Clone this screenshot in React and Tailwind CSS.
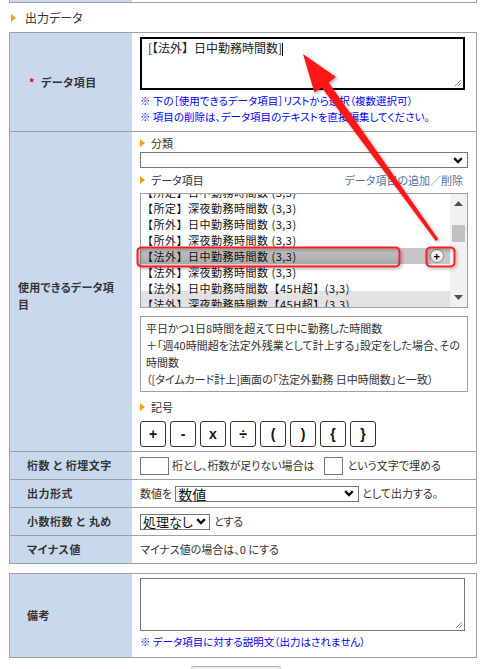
import React from "react";

function Tri() {
  return (
    <svg width="5" height="8" viewBox="0 0 5 8" className="shrink-0">
      <path d="M0 0 L5 4 L0 8Z" fill="#f5a00f" />
    </svg>
  );
}

function Chevron() {
  return (
    <svg width="10" height="7" viewBox="0 0 10 7" className="shrink-0">
      <path d="M1.2 1.2 L5 5 L8.8 1.2" fill="none" stroke="#111" strokeWidth="2.4" />
    </svg>
  );
}

function Grip() {
  return (
    <svg width="9" height="9" viewBox="0 0 9 9" className="absolute right-[1px] bottom-[1px]">
      <path d="M8 2 L2 8 M8 5 L5 8" stroke="#888" strokeWidth="1" />
    </svg>
  );
}

const items = [
  "【所定】日中勤務時間数 (3,3)",
  "【所定】深夜勤務時間数 (3,3)",
  "【所外】日中勤務時間数 (3,3)",
  "【所外】深夜勤務時間数 (3,3)",
  "【法外】日中勤務時間数 (3,3)",
  "【法外】深夜勤務時間数 (3,3)",
  "【法外】日中勤務時間数【45H超】(3,3)",
  "【法外】深夜勤務時間数【45H超】(3,3)",
];

const symbols = ["+", "-", "x", "÷", "(", ")", "{", "}"];

export default function App() {
  return (
    <div className="relative w-[489px] h-[669px] overflow-hidden bg-white font-['Noto_Sans_CJK_JP',sans-serif] text-[#333] [font-feature-settings:'palt']">
      {/* top remnant */}
      <div className="ml-[9px] w-[468px] h-[3px] border-x border-b border-[#a0a0a0] flex">
        <div className="w-[122px] bg-[#c8d9ee]" />
      </div>

      {/* section header */}
      <div className="h-[29px] flex items-center pl-[11px] gap-[9px] text-[12px]">
        <Tri />
        <span className="leading-[16px]">出力データ</span>
      </div>

      {/* main table */}
      <div className="ml-[9px] w-[468px] border border-[#a0a0a0]">
        {/* row 1 */}
        <div className="flex border-b border-[#a0a0a0]">
          <div className="w-[122px] shrink-0 bg-[#c8d9ee] flex items-center pl-[19px] text-[11px] font-bold tracking-[0.5px]">
            <span className="text-[#e00000] mr-[6px]">*</span>データ項目
          </div>
          <div className="flex-1 pl-[8px] pt-[4px] pb-[6px]">
            <div className="relative w-[325px] h-[53px] border-2 border-black bg-white pl-[6px] pt-[1px] text-[12px] leading-[16px] text-[#222] [font-feature-settings:normal]">
              [【法外】日中勤務時間数]
              <span className="inline-block w-[1px] h-[13px] bg-black align-middle" />
              <Grip />
            </div>
            <div className="mt-[3px] text-[10.5px] leading-[16px] text-[#0000ff] whitespace-nowrap">
              <div>※ 下の［使用できるデータ項目］リストから選択（複数選択可）</div>
              <div>※ 項目の削除は、データ項目のテキストを直接編集してください。</div>
            </div>
          </div>
        </div>

        {/* row 2 */}
        <div className="flex border-b border-[#a0a0a0]">
          <div className="w-[122px] shrink-0 bg-[#c8d9ee] flex items-center pl-[8px] pt-[8px] text-[11px] font-bold leading-[17px] tracking-[0.3px]">
            <span>
              使用できるデータ項
              <br />目
            </span>
          </div>
          <div className="flex-1 pl-[8px] pt-[3px] pb-[4px]">
            <div className="flex items-center gap-[6px] h-[16px] text-[11px]">
              <Tri />
              <span>分類</span>
            </div>
            <div className="mt-[1px] w-[328px] h-[16px] border border-[#767676] bg-white flex items-center justify-end pr-[4px]">
              <Chevron />
            </div>
            <div className="mt-[4px] flex items-center justify-between w-[323px] h-[16px] text-[11px]">
              <div className="flex items-center gap-[6px]">
                <Tri />
                <span>データ項目</span>
              </div>
              <span className="text-[#52739c]">データ項目の追加／削除</span>
            </div>

            {/* list box */}
            <div className="mt-[5px] flex w-[328px] h-[115px] border border-[#a0a0a0] bg-white">
              <div className="relative flex-1 overflow-hidden">
                <div className="absolute inset-x-0 bottom-0 h-[16px] bg-[#e2e2e2]" />
                <div className="relative -mt-[10px] text-[11px] tracking-[0.5px] [font-feature-settings:normal] text-[#111]">
                  {items.map((t, i) => (
                    <div
                      key={i}
                      className={
                        "h-[16px] leading-[16px] pl-[1px] whitespace-nowrap flex items-center justify-between " +
                        (i === 4 ? "bg-[#c6c6c6]" : "")
                      }
                    >
                      <span>{t}</span>
                      {i === 4 && (
                        <span className="mr-[6px] w-[14px] h-[14px] rounded-full border border-[#8a8a8a] bg-gradient-to-b from-white to-[#e4e4e4] flex items-center justify-center text-[11px] leading-none font-bold text-black">
                          +
                        </span>
                      )}
                    </div>
                  ))}
                </div>
              </div>
              <div className="w-[17px] shrink-0 bg-[#f1f1f1] flex flex-col items-center">
                <svg width="9" height="5" viewBox="0 0 9 5" className="mt-[7px]">
                  <path d="M0 5 L4.5 0 L9 5Z" fill="#505050" />
                </svg>
                <div className="mt-[19px] w-[13px] h-[17px] bg-[#c1c1c1]" />
                <div className="flex-1" />
                <svg width="9" height="5" viewBox="0 0 9 5" className="mb-[7px]">
                  <path d="M0 0 L4.5 5 L9 0Z" fill="#505050" />
                </svg>
              </div>
            </div>

            {/* description */}
            <div className="mt-[8px] w-[328px] h-[76px] border border-[#a0a0a0] px-[5px] pt-[3px] text-[11px] leading-[17px] whitespace-nowrap">
              <div>平日かつ1日8時間を超えて日中に勤務した時間数</div>
              <div>＋「週40時間超を法定外残業として計上する」設定をした場合、その</div>
              <div>時間数</div>
              <div>（[タイムカード計上]画面の「法定外勤務 日中時間数」と一致）</div>
            </div>

            <div className="mt-[7px] flex items-center gap-[6px] h-[16px] text-[11px]">
              <Tri />
              <span>記号</span>
            </div>
            <div className="mt-[6px] flex gap-[4px]">
              {symbols.map((s) => (
                <div
                  key={s}
                  className="w-[26px] h-[26px] border border-[#333] rounded-[3px] bg-white flex items-center justify-center text-[14px] font-bold font-['Liberation_Sans',sans-serif] text-[#111]"
                >
                  {s}
                </div>
              ))}
            </div>
          </div>
        </div>

        {/* row 3 */}
        <div className="flex h-[28px] border-b border-[#a0a0a0]">
          <div className="w-[122px] shrink-0 bg-[#c8d9ee] flex items-center pl-[17px] text-[11px] font-bold tracking-[0.5px]">
            桁数 と 桁埋文字
          </div>
          <div className="flex-1 pl-[8px] flex items-center text-[11px]">
            <div className="w-[29px] h-[18px] border border-[#767676] bg-white" />
            <span className="ml-[3px]">桁とし、桁数が足りない場合は</span>
            <div className="ml-[9px] w-[19px] h-[18px] border border-[#767676] bg-white" />
            <span className="ml-[5px]">という文字で埋める</span>
          </div>
        </div>

        {/* row 4 */}
        <div className="flex h-[28px] border-b border-[#a0a0a0]">
          <div className="w-[122px] shrink-0 bg-[#c8d9ee] flex items-center pl-[17px] text-[11px] font-bold tracking-[0.5px]">
            出力形式
          </div>
          <div className="flex-1 pl-[8px] flex items-center text-[11px]">
            <span>数値を</span>
            <div className="ml-[3px] w-[184px] h-[16px] border border-[#767676] bg-white flex items-center justify-between pl-[2px] pr-[4px]">
              <span className="text-[14px] leading-[14px] text-[#111]">数値</span>
              <Chevron />
            </div>
            <span className="ml-[3px]">として出力する。</span>
          </div>
        </div>

        {/* row 5 */}
        <div className="flex h-[28px] border-b border-[#a0a0a0]">
          <div className="w-[122px] shrink-0 bg-[#c8d9ee] flex items-center pl-[17px] text-[11px] font-bold tracking-[0.5px]">
            小数桁数 と 丸め
          </div>
          <div className="flex-1 pl-[8px] flex items-center text-[11px]">
            <div className="w-[70px] h-[16px] border border-[#767676] bg-white flex items-center justify-between pl-[2px] pr-[3px]">
              <span className="text-[13px] leading-[14px] text-[#111]">処理なし</span>
              <Chevron />
            </div>
            <span className="ml-[4px]">とする</span>
          </div>
        </div>

        {/* row 6 */}
        <div className="flex h-[27px]">
          <div className="w-[122px] shrink-0 bg-[#c8d9ee] flex items-center pl-[17px] text-[11px] font-bold tracking-[0.5px]">
            マイナス値
          </div>
          <div className="flex-1 pl-[8px] flex items-center text-[11px]">マイナス値の場合は、0 にする</div>
        </div>
      </div>

      {/* second table */}
      <div className="mt-[9px] ml-[9px] w-[468px] border border-[#a0a0a0] flex">
        <div className="w-[122px] shrink-0 bg-[#c8d9ee] flex items-center pl-[17px] text-[11px] font-bold tracking-[0.5px]">
          備考
        </div>
        <div className="flex-1 pl-[8px] pt-[4px] pb-[7px]">
          <div className="relative w-[325px] h-[53px] border border-[#767676] bg-white">
            <Grip />
          </div>
          <div className="mt-[3px] text-[10.5px] leading-[16px] text-[#0000ff]">
            ※ データ項目に対する説明文（出力はされません）
          </div>
        </div>
      </div>

      {/* bottom button */}
      <div className="mt-[8px] ml-[191px] w-[90px] h-[24px] border border-[#adadad] rounded-[3px] bg-[#efefef]" />

      {/* annotation overlay */}
      <svg
        width="489"
        height="669"
        viewBox="0 0 489 669"
        className="absolute left-0 top-0 pointer-events-none"
      >
        <defs>
          <linearGradient id="hl" x1="0" y1="0" x2="0" y2="1">
            <stop offset="0" stopColor="#000" stopOpacity="0.02" />
            <stop offset="0.5" stopColor="#000" stopOpacity="0.06" />
            <stop offset="1" stopColor="#000" stopOpacity="0.14" />
          </linearGradient>
          <filter id="sh" x="-20%" y="-20%" width="140%" height="140%">
            <feDropShadow dx="1.5" dy="1.5" stdDeviation="1.5" floodColor="#000" floodOpacity="0.35" />
          </filter>
        </defs>
        <rect x="137.5" y="247.5" width="262" height="19" rx="4" fill="url(#hl)" stroke="#ff1e1e" strokeWidth="2" filter="url(#sh)" />
        <rect x="426.5" y="247.5" width="28" height="19" rx="4" fill="none" stroke="#ff1e1e" strokeWidth="2" filter="url(#sh)" />
        <polygon
          points="303,54 336,77 328.6,82.4 438.2,239.1 435.8,240.9 321.8,87.4 314.4,92.6"
          fill="#ff1414"
          filter="url(#sh)"
        />
      </svg>
    </div>
  );
}
